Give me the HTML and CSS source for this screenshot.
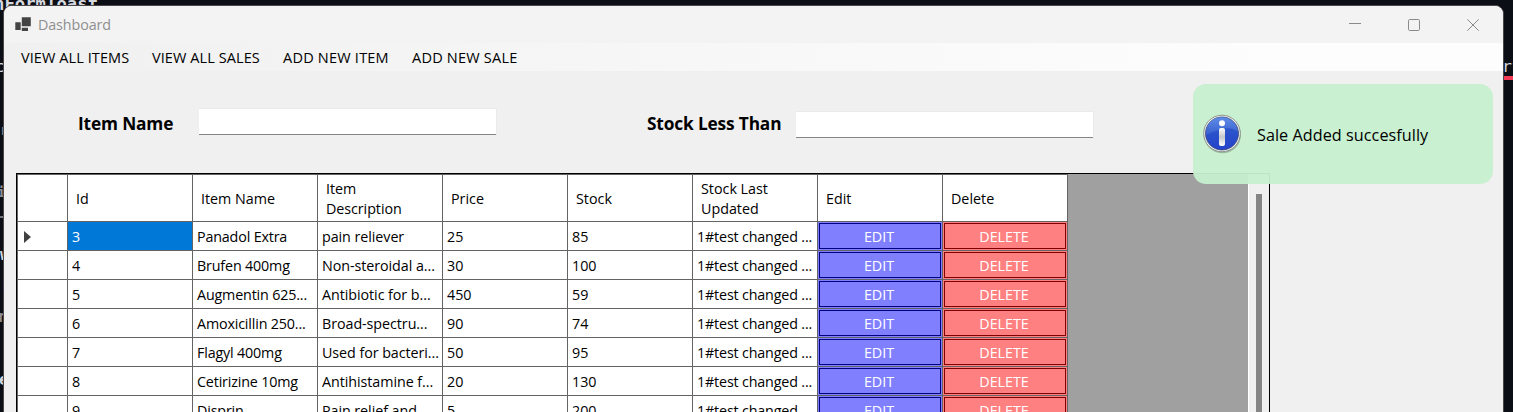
FILE: index.html
```
<!DOCTYPE html>
<html lang="en">
<head>
<meta charset="utf-8">
<title>Dashboard</title>
<link rel="stylesheet" href="styles.css">
</head>
<body>
<div class="desktop">
  <div class="editor" aria-hidden="true">
    <span class="code c1">nFormToast</span>
    <span class="code c2">c</span>
    <span class="code c3">r</span>
    <span class="code c4">i</span>
    <span class="code c5">r</span>
    <span class="code c6">w</span>
    <span class="code c7">r</span>
    <span class="code c8">r</span>
    <span class="code c9">e</span>
    <span class="code c10">rt</span>
    <span class="marker"></span>
  </div>
  <main class="window">
    <header class="titlebar">
      <svg class="app-icon" width="16" height="14" viewBox="0 0 16 14"><path fill="#444" d="M.3 5.2h5.4V13H.3zM6.8.3h9v9h-9zM6.8 10.7H13V14H6.800z"/></svg>
      <span class="title">Dashboard</span>
      <span class="controls">
        <svg width="12" height="12" viewBox="0 0 12 12"><path d="M0 4.500h12"/></svg>
        <svg width="12" height="12" viewBox="0 0 12 12"><rect x=".5" y=".5" width="11" height="11" rx="1.200"/></svg>
        <svg width="12" height="12" viewBox="0 0 12 12"><path d="M.3.3l11.400 11.400M11.700.3L.3 11.700"/></svg>
      </span>
    </header>
    <nav class="menu">
      <span class="m1">VIEW ALL ITEMS</span><span class="m2">VIEW ALL SALES</span><span class="m3">ADD NEW ITEM</span><span class="m4">ADD NEW SALE</span>
    </nav>
    <section class="filters">
      <label class="f1" for="name">Item Name</label><input class="i1" id="name">
      <label class="f2" for="stock">Stock Less Than</label><input class="i2" id="stock">
    </section>
    <section class="grid">
      <div class="rows">
        <div class="row head"><div></div><div>Id</div><div>Item Name</div><div>Item<br>Description</div><div>Price</div><div>Stock</div><div>Stock Last<br>Updated</div><div>Edit</div><div>Delete</div></div>
        <div class="row"><div><svg class="arrow" width="7" height="12" viewBox="0 0 7 12"><path d="M0 0L7 6 0 12z"/></svg></div><div class="selected">3</div><div>Panadol Extra</div><div>pain reliever</div><div>25</div><div>85</div><div>1#test changed ...</div><div class="act edit"><button>EDIT</button></div><div class="act del"><button>DELETE</button></div></div>
        <div class="row"><div></div><div>4</div><div>Brufen 400mg</div><div>Non-steroidal a...</div><div>30</div><div>100</div><div>1#test changed ...</div><div class="act edit"><button>EDIT</button></div><div class="act del"><button>DELETE</button></div></div>
        <div class="row"><div></div><div>5</div><div>Augmentin 625...</div><div>Antibiotic for b...</div><div>450</div><div>59</div><div>1#test changed ...</div><div class="act edit"><button>EDIT</button></div><div class="act del"><button>DELETE</button></div></div>
        <div class="row"><div></div><div>6</div><div>Amoxicillin 250...</div><div>Broad-spectru...</div><div>90</div><div>74</div><div>1#test changed ...</div><div class="act edit"><button>EDIT</button></div><div class="act del"><button>DELETE</button></div></div>
        <div class="row"><div></div><div>7</div><div>Flagyl 400mg</div><div>Used for bacteri...</div><div>50</div><div>95</div><div>1#test changed ...</div><div class="act edit"><button>EDIT</button></div><div class="act del"><button>DELETE</button></div></div>
        <div class="row"><div></div><div>8</div><div>Cetirizine 10mg</div><div>Antihistamine f...</div><div>20</div><div>130</div><div>1#test changed ...</div><div class="act edit"><button>EDIT</button></div><div class="act del"><button>DELETE</button></div></div>
        <div class="row"><div></div><div>9</div><div>Disprin</div><div>Pain relief and...</div><div>5</div><div>200</div><div>1#test changed ...</div><div class="act edit"><button>EDIT</button></div><div class="act del"><button>DELETE</button></div></div>
      </div>
      <div class="scrollbar"><div class="thumb"></div></div>
    </section>
  </main>
  <aside class="toast">
    <svg class="info" width="40" height="40" viewBox="0 0 40 40">
      <defs>
        <linearGradient id="ball" x1="0" y1="0" x2="0" y2="1"><stop offset="0" stop-color="#3060c8"/><stop offset="1" stop-color="#2443cc"/></linearGradient>
        <linearGradient id="gloss" x1="0" y1="0" x2="0" y2="1"><stop offset="0" stop-color="#6a98ef"/><stop offset="1" stop-color="#3b62cf"/></linearGradient>
        <linearGradient id="stem" x1="0" y1="0" x2="0" y2="1"><stop offset="0" stop-color="#fff"/><stop offset=".5" stop-color="#c4c8ca"/><stop offset="1" stop-color="#fff"/></linearGradient>
      </defs>
      <circle cx="19.500" cy="20.800" r="18.500" fill="#64806b" opacity=".45"/>
      <circle cx="19" cy="19.500" r="18.300" fill="#f2f3f2" stroke="#8c938e"/>
      <circle cx="19" cy="19.500" r="16.500" fill="url(#ball)" stroke="#35446f" stroke-width=".8"/>
      <path d="M3 21A16 16 0 0 1 34.900 17.500Q27 12 17 15.500 9 18 3 21z" fill="url(#gloss)" opacity=".8"/>
      <circle cx="19" cy="9.300" r="3" fill="#fff"/>
      <rect x="16" y="14" width="6" height="18" rx="2" fill="url(#stem)"/>
    </svg>
    <span>Sale Added succesfully</span>
  </aside>
</div>
</body>
</html>
```
FILE: styles.css
```
* { box-sizing: border-box; }
body { margin: 0; font-family: "Open Sans", sans-serif; font-size: 14.3px; color: #000; }
.desktop { position: relative; width: 1513px; height: 412px; overflow: hidden; background: #0b0e15; padding: 5px 9px 0 3px; }

/* editor window behind the form */
.code { position: absolute; font: bold 16.5px/20px "DejaVu Sans Mono", monospace; color: #d5d8de; white-space: pre; }
.c1 { left: -6px; top: -6px; font-size: 17.3px; }
.c2 { left: -5px; top: 57px; font-weight: normal; }
.c3 { left: 0; top: 120px; color: #77797f; font-size: 14px; }
.c4 { left: -3px; top: 182px; color: #8b8d94; font-size: 14px; }
.c5 { left: -6px; top: 210px; color: #77797f; }
.c6 { left: 0; top: 245px; }
.c7 { left: 1px; top: 276px; color: #aaa; }
.c8 { left: -3px; top: 307px; color: #8b8d94; }
.c9 { left: -1px; top: 370px; }
.c10 { left: 1502px; top: 57px; font-weight: normal; }
.marker { position: absolute; left: 1503px; top: 76px; width: 10px; height: 4px; background: #f43a57; }

.window { position: relative; width: 1501px; height: 430px; border: 1px solid #4a4649; border-radius: 9px; background: #f0f0f0; overflow: hidden; display: flex; flex-direction: column; }
.titlebar { flex: none; height: 37px; background: #f3f3f3; display: flex; align-items: center; padding: 0 24px 0 11px; }
.app-icon { margin-top: -2px; }
.title { margin-left: 7px; color: #8f8f8f; font-size: 14.3px; letter-spacing: -.1px; }
.controls { margin-left: auto; display: flex; gap: 47px; }
.controls svg { fill: none; stroke: #8a8a8a; stroke-width: 1; }
.menu { flex: none; height: 28px; background: linear-gradient(90deg, #f0f0f0, #fdfdfd 85%); display: flex; align-items: center; padding-left: 17px; white-space: nowrap; font-size: 14.5px; letter-spacing: .08px; }
.menu span { width: 131px; }
.menu .m3 { width: 129px; letter-spacing: .22px; }
.menu .m4 { letter-spacing: .22px; }

.filters { flex: none; height: 102px; display: flex; align-items: flex-start; padding: 38px 0 0 74px; }
.filters label { font-weight: bold; font-size: 17.3px; line-height: 30px; letter-spacing: -.15px; white-space: nowrap; }
.f1 { width: 121px; }
.f2 { width: 149px; margin-left: 151px; }
.filters input { width: 297px; height: 26px; padding: 0 6px; border: 0; border-bottom: 1px solid #858585; background: #fff; box-shadow: 0 0 0 1px #eaeaea; clip-path: inset(-1px -1px 0 0); border-radius: 0; }
.filters .i2 { margin-top: 3px; }

.grid { flex: none; width: 1254px; height: 300px; margin-left: 12px; border: 1px solid #000; background: #a0a0a0; display: flex; justify-content: space-between; }
.rows { width: 1051px; border-top: 1px solid #646464; border-left: 1px solid #646464; }
.row { display: grid; grid-template-columns: 50px repeat(8, 125px); height: 29px; }
.row > div { background: #fff; border-right: 1px solid #646464; border-bottom: 1px solid #646464; padding: 1px 0 0 4px; display: flex; align-items: center; line-height: 20px; white-space: nowrap; overflow: hidden; letter-spacing: -.16px; }
.row > div:nth-child(5), .row > div:nth-child(6), .row.head > div { letter-spacing: 0; }
.row > div:nth-child(4) { letter-spacing: -.06px; }
.row.head { height: 47px; }
.row.head > div { padding: 1px 0 0 8px; }
.row > .selected { background: #0078d7; color: #fff; }
.row > .act { padding: 1px; }
.act button { flex: 1; height: 26px; padding: 2px 0 0; border: 1px solid; font: inherit; letter-spacing: -.02px; background: transparent; }
.row > .edit { background: #8080ff; }
.row > .del { background: #ff8080; }
.edit button { border-color: #000080; color: #fff; }
.edit button { padding-right: 2px; }
.del button { border-color: #800000; color: #fff; padding-right: 2px; }
.row > div:first-child { padding-left: 6px; }
.arrow { fill: #404040; }
.scrollbar { width: 21px; background: #f0f0f0; border-left: 1px solid #fff; padding: 20px 0 0 7px; }
.thumb { width: 6px; height: 280px; background: #858585; }

.toast { position: absolute; left: 1193px; top: 84px; width: 300px; height: 100px; border-radius: 13px; background: rgba(198, 239, 206, .95); display: flex; align-items: center; padding-left: 10px; font-size: 16.2px; letter-spacing: .05px; white-space: nowrap; }
.toast .info { margin-top: -1px; }
.toast span { margin: 2px 0 0 14px; }
```
